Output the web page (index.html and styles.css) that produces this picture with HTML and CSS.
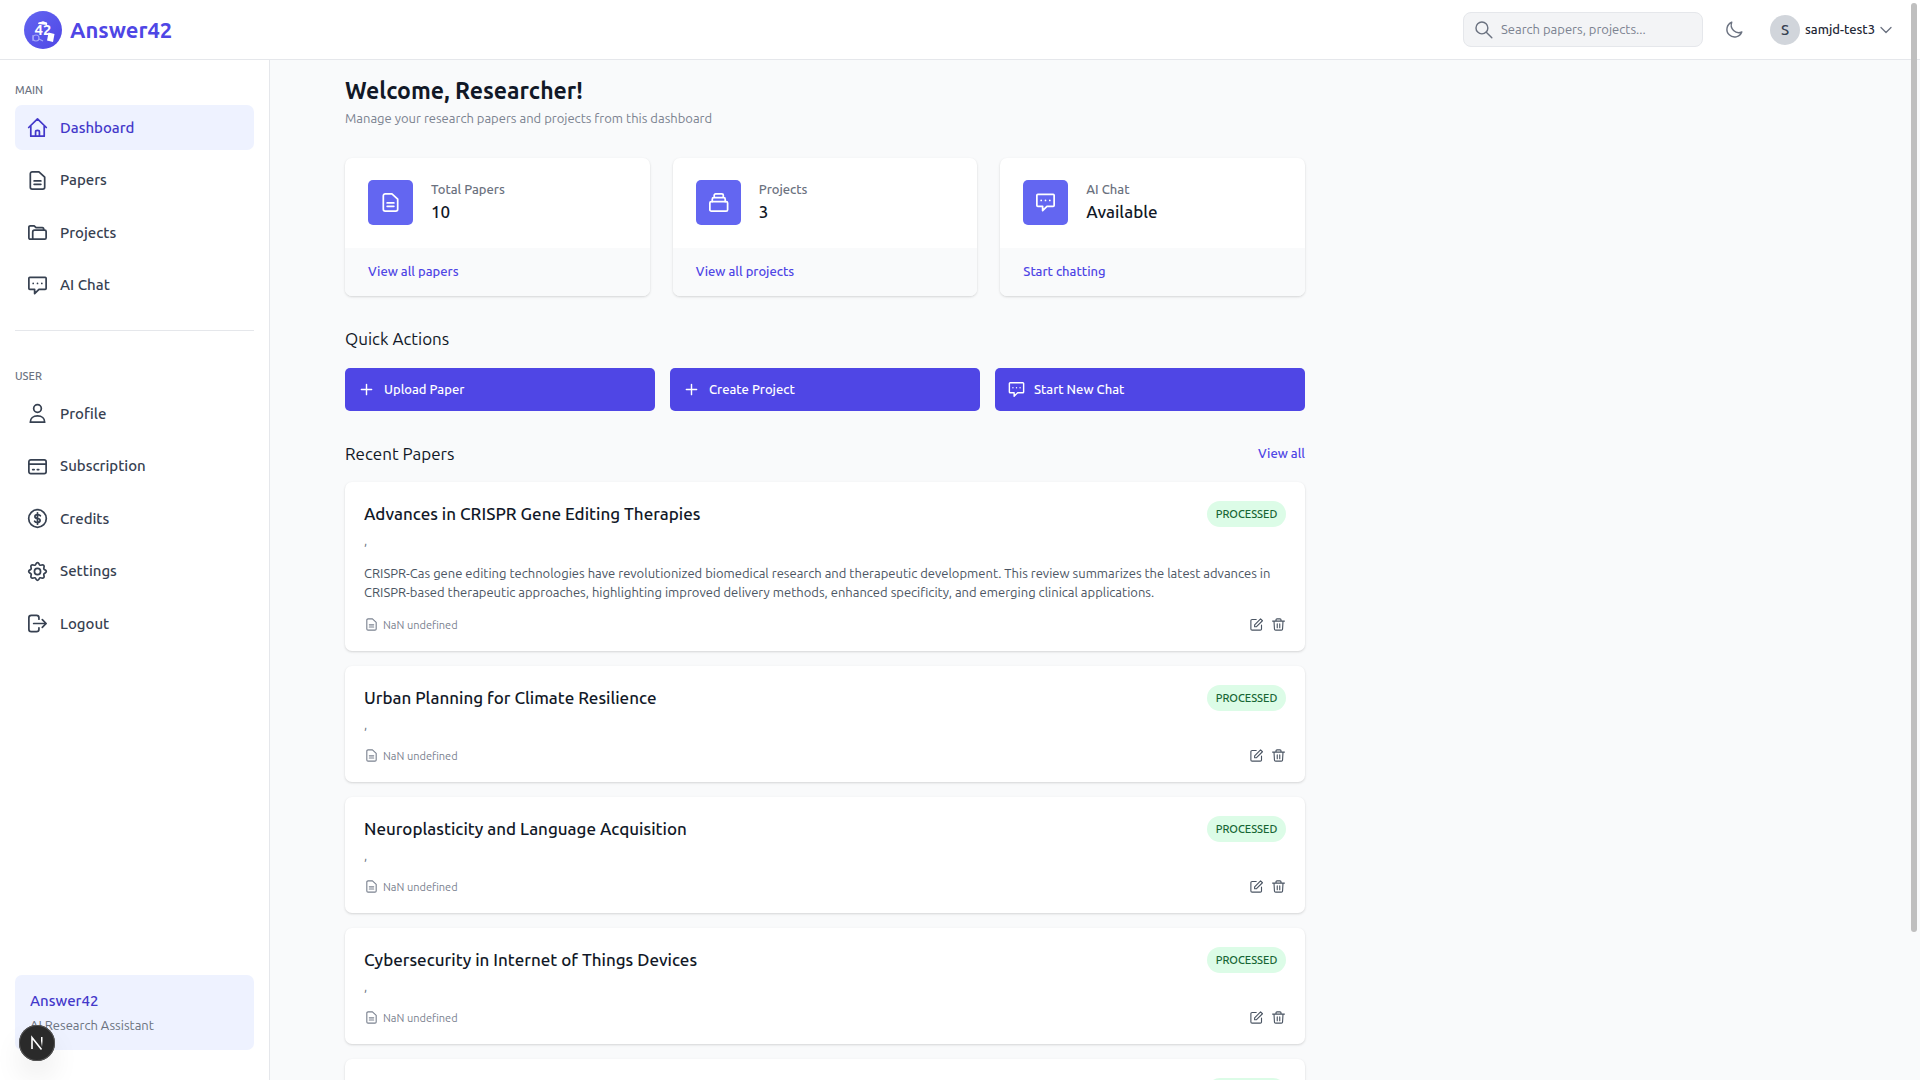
FILE: index.html
```html
<!DOCTYPE html>
<html lang="en">
<head>
<meta charset="utf-8">
<meta name="viewport" content="width=device-width, initial-scale=1">
<title>Answer42 - Dashboard</title>
<link rel="stylesheet" href="styles.css">
</head>
<body>
<svg class="sprite" aria-hidden="true">
  <symbol id="home" viewBox="0 0 24 24"><path d="M2.8 12 12 3l9.2 9M5 10.5V21h14V10.5M10 21v-4.5q0-1.5 2-1.5t2 1.5V21"/></symbol>
  <symbol id="doc" viewBox="0 0 24 24"><path d="M13.5 3H6.5a2 2 0 0 0-2 2v14a2 2 0 0 0 2 2h11a2 2 0 0 0 2-2V8.5zM8.5 12.5h7M8.5 16h7"/></symbol>
  <symbol id="folder" viewBox="0 0 24 24"><path d="M7 19H4.5A1.5 1.5 0 0 1 3 17.5V6.5A1.5 1.5 0 0 1 4.5 5h4l2 2H17q1.5 0 1.5 2M9 9.5h10.5a1.5 1.5 0 0 1 1.5 1.5v6.5a1.5 1.5 0 0 1-1.5 1.5H8.5A1.5 1.5 0 0 1 7 17.5v-6a2 2 0 0 1 2-2z"/></symbol>
  <symbol id="chat" viewBox="0 0 24 24"><path d="M4 3.5h16a1 1 0 0 1 1 1V15a1 1 0 0 1-1 1h-6.5L9 20.5V16H4a1 1 0 0 1-1-1V4.5a1 1 0 0 1 1-1zM7.5 9.8h.01M12 9.8h.01M16.5 9.8h.01"/></symbol>
  <symbol id="user" viewBox="0 0 24 24"><circle cx="12" cy="6.8" r="4"/><path d="M4.5 21c0-3.8 3-6.5 7.5-6.5s7.5 2.7 7.5 6.5z"/></symbol>
  <symbol id="card" viewBox="0 0 24 24"><rect x="3" y="5" width="18" height="14.5" rx="2"/><path d="M3 9.5h18M7 15.2h1.5M11.8 15.2h1.5"/></symbol>
  <symbol id="coin" viewBox="0 0 24 24"><circle cx="12" cy="12" r="9.2"/><path d="M15 9.2q-.8-1.3-3-1.3c-3.6 0-3.6 4.1 0 4.1s3.6 4.1 0 4.1q-2.2 0-3-1.3M12 6v12"/></symbol>
  <symbol id="gear" viewBox="0 0 24 24"><circle cx="12" cy="12" r="3.2"/><path d="M12 2.8c1.8 0 1.5 2.1 2.7 2.6s2.5-1.2 3.8.1-.4 2.6.1 3.8 2.6.9 2.6 2.7-2.1 1.5-2.6 2.7 1.2 2.5-.1 3.8-2.6-.4-3.8.1-.9 2.6-2.7 2.6-1.5-2.1-2.7-2.6-2.5 1.2-3.8-.1.4-2.6-.1-3.8-2.6-.9-2.6-2.7 2.1-1.5 2.6-2.7-1.2-2.5.1-3.8 2.6.4 3.8-.1.9-2.6 2.7-2.6z"/></symbol>
  <symbol id="logout" viewBox="0 0 24 24"><path d="M13.5 7.5V6a2.5 2.5 0 0 0-2.5-2.5H5.5A2.5 2.5 0 0 0 3 6v12a2.5 2.5 0 0 0 2.5 2.5H11a2.5 2.5 0 0 0 2.5-2.5v-1.5M8 12h13M17 8l4 4-4 4"/></symbol>
  <symbol id="stack" viewBox="0 0 24 24"><rect x="3" y="11" width="18.5" height="10" rx="1.5"/><path d="M5.5 11V8.5a1.5 1.5 0 0 1 1.5-1.5h10.5a1.5 1.5 0 0 1 1.5 1.5V11M7.5 7V4.5A1.5 1.5 0 0 1 9 3h6.5A1.5 1.5 0 0 1 17 4.5V7"/></symbol>
  <symbol id="plus" viewBox="0 0 24 24"><path d="M12 5.5v13M5.500 12h13"/></symbol>
  <symbol id="edit" viewBox="0 0 24 24"><path d="M11.5 4H5a2 2 0 0 0-2 2v13a2 2 0 0 0 2 2h13a2 2 0 0 0 2-2v-6M9 12.5 18.5 3l3 3-9.5 9.5H9z"/></symbol>
  <symbol id="trash" viewBox="0 0 24 24"><path d="M2.5 6.5h19M4.8 6.5 5.5 19a2 2 0 0 0 2 2h9a2 2 0 0 0 2-2l.7-12.5M8 6V4.5A1.5 1.5 0 0 1 9.5 3h5A1.5 1.5 0 0 1 16 4.5V6M10 11v6M14 11v6"/></symbol>
  <symbol id="search" viewBox="0 0 24 24"><circle cx="10" cy="10" r="7.5"/><path d="m15.5 15.5 7 7"/></symbol>
  <symbol id="moon" viewBox="0 0 24 24"><path d="M8.5 2.8a9.7 9.7 0 1 0 12.7 12.4A9.7 9.7 0 0 1 8.5 2.8z"/></symbol>
  <symbol id="chevron" viewBox="0 0 24 24"><path d="m2 7 10 10L22 7"/></symbol>
</svg>

<div class="app">
  <header class="topbar">
    <a class="brand" href="#">
      <svg class="brand-logo" viewBox="0 0 38 38" aria-hidden="true">
        <defs><linearGradient id="logo-fill" x1="0" y1="0" x2="1" y2="1"><stop offset="0" stop-color="#6366f1"/><stop offset="1" stop-color="#4f46e5"/></linearGradient></defs>
        <circle cx="19" cy="19" r="19" fill="url(#logo-fill)"/>
        <path d="M14 13q0-2.500 3-2 2-1.500 4 0 3 0 2 3z" fill="#fff"/>
        <text class="brand-mark" x="19" y="24">42</text>
        <path d="m24.500 21.500 6 1.500-1.500 8-6-1.500z" fill="#fff"/>
        <g fill="none" stroke="#a5a7f7" stroke-width="1.200"><circle cx="12" cy="27" r="3"/><path d="m15 28 4 2M9 24v6"/></g>
      </svg>
      <span>Answer42</span>
    </a>
    <div class="topbar-tools">
      <label class="search"><svg class="icon icon-md"><use href="#search"/></svg><input type="search" placeholder="Search papers, projects..." aria-label="Search"></label>
      <button class="theme" aria-label="Toggle theme"><svg class="icon icon-md"><use href="#moon"/></svg></button>
      <button class="account"><span class="avatar">S</span><span>samjd-test3</span><svg class="icon icon-xs"><use href="#chevron"/></svg></button>
    </div>
  </header>

  <aside class="sidebar">
    <nav aria-label="Main">
      <h2 class="nav-label">MAIN</h2>
      <ul class="nav-list nav-main">
        <li><a class="nav-item active" href="#"><svg class="icon"><use href="#home"/></svg>Dashboard</a></li>
        <li><a class="nav-item" href="#"><svg class="icon"><use href="#doc"/></svg>Papers</a></li>
        <li><a class="nav-item" href="#"><svg class="icon"><use href="#folder"/></svg>Projects</a></li>
        <li><a class="nav-item" href="#"><svg class="icon"><use href="#chat"/></svg>AI Chat</a></li>
      </ul>
    </nav>
    <nav class="nav-second" aria-label="User">
      <h2 class="nav-label">USER</h2>
      <ul class="nav-list nav-user">
        <li><a class="nav-item" href="#"><svg class="icon"><use href="#user"/></svg>Profile</a></li>
        <li><a class="nav-item" href="#"><svg class="icon"><use href="#card"/></svg>Subscription</a></li>
        <li><a class="nav-item" href="#"><svg class="icon"><use href="#coin"/></svg>Credits</a></li>
        <li><a class="nav-item" href="#"><svg class="icon"><use href="#gear"/></svg>Settings</a></li>
        <li><a class="nav-item" href="#"><svg class="icon"><use href="#logout"/></svg>Logout</a></li>
      </ul>
    </nav>
    <div class="promo">
      <strong>Answer42</strong>
      <span>AI Research Assistant</span>
    </div>
  </aside>

  <main class="main">
    <div class="content">
      <h1>Welcome, Researcher!</h1>
      <p class="lead">Manage your research papers and projects from this dashboard</p>

      <section class="stats" aria-label="Overview">
        <article class="stat">
          <div class="stat-body"><span class="stat-icon"><svg class="icon"><use href="#doc"/></svg></span><p><span class="stat-name">Total Papers</span><span class="stat-value">10</span></p></div>
          <div class="stat-foot"><a href="#">View all papers</a></div>
        </article>
        <article class="stat">
          <div class="stat-body"><span class="stat-icon"><svg class="icon"><use href="#stack"/></svg></span><p><span class="stat-name">Projects</span><span class="stat-value">3</span></p></div>
          <div class="stat-foot"><a href="#">View all projects</a></div>
        </article>
        <article class="stat">
          <div class="stat-body"><span class="stat-icon"><svg class="icon"><use href="#chat"/></svg></span><p><span class="stat-name">AI Chat</span><span class="stat-value">Available</span></p></div>
          <div class="stat-foot"><a href="#">Start chatting</a></div>
        </article>
      </section>

      <h2 class="section-title">Quick Actions</h2>
      <div class="actions">
        <button><svg class="icon icon-md"><use href="#plus"/></svg>Upload Paper</button>
        <button><svg class="icon icon-md"><use href="#plus"/></svg>Create Project</button>
        <button><svg class="icon icon-md"><use href="#chat"/></svg>Start New Chat</button>
      </div>

      <div class="section-head">
        <h2 class="section-title">Recent Papers</h2>
        <a href="#">View all</a>
      </div>
      <div class="papers">
        <article class="paper">
          <div class="paper-head"><h3>Advances in CRISPR Gene Editing Therapies</h3><span class="badge">PROCESSED</span></div>
          <p class="authors">,</p>
          <p class="abstract">CRISPR-Cas gene editing technologies have revolutionized biomedical research and therapeutic development. This review summarizes the latest advances in CRISPR-based therapeutic approaches, highlighting improved delivery methods, enhanced specificity, and emerging clinical applications.</p>
          <div class="paper-foot"><span class="size"><svg class="icon icon-sm"><use href="#doc"/></svg>NaN undefined</span><button aria-label="Edit"><svg class="icon icon-sm"><use href="#edit"/></svg></button><button aria-label="Delete"><svg class="icon icon-sm"><use href="#trash"/></svg></button></div>
        </article>
        <article class="paper">
          <div class="paper-head"><h3>Urban Planning for Climate Resilience</h3><span class="badge">PROCESSED</span></div>
          <p class="authors">,</p>
          <div class="paper-foot"><span class="size"><svg class="icon icon-sm"><use href="#doc"/></svg>NaN undefined</span><button aria-label="Edit"><svg class="icon icon-sm"><use href="#edit"/></svg></button><button aria-label="Delete"><svg class="icon icon-sm"><use href="#trash"/></svg></button></div>
        </article>
        <article class="paper">
          <div class="paper-head"><h3>Neuroplasticity and Language Acquisition</h3><span class="badge">PROCESSED</span></div>
          <p class="authors">,</p>
          <div class="paper-foot"><span class="size"><svg class="icon icon-sm"><use href="#doc"/></svg>NaN undefined</span><button aria-label="Edit"><svg class="icon icon-sm"><use href="#edit"/></svg></button><button aria-label="Delete"><svg class="icon icon-sm"><use href="#trash"/></svg></button></div>
        </article>
        <article class="paper">
          <div class="paper-head"><h3>Cybersecurity in Internet of Things Devices</h3><span class="badge">PROCESSED</span></div>
          <p class="authors">,</p>
          <div class="paper-foot"><span class="size"><svg class="icon icon-sm"><use href="#doc"/></svg>NaN undefined</span><button aria-label="Edit"><svg class="icon icon-sm"><use href="#edit"/></svg></button><button aria-label="Delete"><svg class="icon icon-sm"><use href="#trash"/></svg></button></div>
        </article>
        <article class="paper paper-next">
          <div class="paper-head"><span class="badge"></span></div>
        </article>
      </div>
    </div>
  </main>
</div>
<button class="dev-badge" aria-label="Open developer tools">
  <svg viewBox="0 0 36 36" aria-hidden="true"><defs><linearGradient id="n-fade" x1="0" y1="0" x2="0" y2="1"><stop offset=".4" stop-color="#fff"/><stop offset="1" stop-color="#fff" stop-opacity="0"/></linearGradient></defs><path d="M13 24V12.500L22.500 24.500" fill="none" stroke="#fff" stroke-width="1.600"/><path d="M22 12h1.500v10H22z" fill="url(#n-fade)"/></svg>
</button>
<div class="scroll-thumb" aria-hidden="true"></div>
</body>
</html>
```
FILE: styles.css
```css
:root {
  --indigo: #4f46e5;
  --indigo-dark: #4338ca;
  --indigo-soft: #eef2ff;
  --ink: #111827;
  --text: #374151;
  --muted: #6b7280;
  --line: #e5e7eb;
  --page: #f9fafb;
  --medium: 500;
  --shadow: 0 1px 3px rgb(0 0 0 / 10%), 0 1px 2px rgb(0 0 0 / 6%);
}

* { box-sizing: border-box; }

body {
  margin: 0;
  font: 13px/19px Ubuntu, "Noto Sans", sans-serif;
  color: var(--text);
  background: var(--page);
}

h1, h2, h3, p, ul { margin: 0; padding: 0; }
ul { list-style: none; }
a { color: var(--indigo); font-weight: var(--medium); text-decoration: none; }
button { font: inherit; color: inherit; background: none; border: 0; padding: 0; cursor: pointer; }

.sprite { display: none; }
.icon {
  flex: none;
  width: 23px;
  height: 23px;
  fill: none;
  stroke: currentColor;
  stroke-width: 1.8;
  stroke-linecap: round;
  stroke-linejoin: round;
}
.icon-md { width: 19px; height: 19px; }
.icon-sm { width: 15px; height: 15px; }
.icon-xs { width: 12px; height: 12px; stroke-width: 2.6; }

.app {
  display: grid;
  grid-template: auto 1fr / 270px 1fr;
  height: 100vh;
}

/* Top bar */
.topbar {
  grid-column: 1 / -1;
  display: flex;
  align-items: center;
  justify-content: space-between;
  height: 60px;
  padding: 0 28px 0 24px;
  background: #fff;
  border-bottom: 1px solid var(--line);
}
.brand { display: flex; align-items: center; gap: 8px; font-size: 22px; line-height: 28px; font-weight: 600; }
.brand-logo { width: 38px; height: 38px; }
.brand-mark { font-size: 15px; font-weight: 700; fill: #fff; text-anchor: middle; }
.topbar-tools { display: flex; align-items: center; }
.search {
  display: flex;
  align-items: center;
  gap: 8px;
  width: 240px;
  height: 35px;
  padding: 0 10px;
  color: var(--muted);
  background: #f3f4f6;
  border: 1px solid var(--line);
  border-radius: 8px;
}
.search input { flex: 1; min-width: 0; height: 19px; padding: 0; font: inherit; color: inherit; background: none; border: 0; outline: 0; }
.search input::placeholder { color: #7b8290; }
.theme { display: flex; margin: 0 26px 0 22px; color: var(--muted); }
.account { display: flex; align-items: center; gap: 5px; color: #1f2937; font-weight: var(--medium); }
.account .icon { color: var(--muted); }
.avatar { width: 30px; height: 30px; line-height: 30px; border-radius: 50%; background: #d1d5db; color: var(--text); font-size: 15px; }

/* Sidebar */
.sidebar {
  display: flex;
  flex-direction: column;
  min-height: 0;
  padding: 20px 15px 30px;
  background: #fff;
  border-right: 1px solid var(--line);
}
.nav-label { font-size: 11px; line-height: 20px; font-weight: var(--medium); color: var(--muted); }
.nav-list { display: flex; flex-direction: column; justify-content: space-between; margin-top: 5px; }
.nav-main { min-height: 203px; }
.nav-user { min-height: 255px; }
.nav-item {
  display: flex;
  align-items: center;
  gap: 11px;
  height: 45px;
  padding: 0 11px;
  border-radius: 7px;
  color: var(--text);
  font-size: 15px;
  line-height: 20px;
}
.nav-item.active { background: var(--indigo-soft); color: var(--indigo-dark); }
.nav-second { margin-top: 22px; padding-top: 35px; border-top: 1px solid var(--line); }
.promo { display: grid; margin-top: auto; padding: 15px; gap: 4px; border-radius: 7px; background: var(--indigo-soft); }
.promo strong { font-size: 15px; line-height: 22px; font-weight: var(--medium); color: var(--indigo-dark); }
.promo span { color: var(--muted); }

/* Main column */
.main { min-height: 0; overflow-y: auto; scrollbar-width: none; }
.content { max-width: 1110px; padding: 16px 75px; }
h1 { font-size: 23px; line-height: 30px; font-weight: 600; color: var(--ink); }
.lead { margin-top: 3px; color: #7b8290; }

.stats { display: grid; grid-template-columns: repeat(3, 1fr); gap: 23px; margin-top: 30px; }
.stat { overflow: hidden; border-radius: 7px; background: #fff; box-shadow: var(--shadow); }
.stat-body { display: flex; gap: 18px; height: 90px; padding: 22px 23px; }
.stat-icon { display: grid; place-items: center; width: 45px; height: 45px; border-radius: 5px; background: #6366f1; color: #fff; }
.stat-body p { display: grid; align-content: start; font-weight: var(--medium); }
.stat-name { color: var(--muted); }
.stat-value { font-size: 17px; line-height: 26px; color: var(--ink); }
.stat-foot { padding: 14px 23px 15px; background: var(--page); }

.section-title { font-size: 17px; line-height: 26px; font-weight: 400; color: var(--ink); }
.stats + .section-title { margin-top: 30px; }
.actions { display: grid; grid-template-columns: repeat(3, 1fr); gap: 15px; margin-top: 16px; }
.actions button {
  display: flex;
  align-items: center;
  gap: 8px;
  height: 43px;
  padding: 0 12px;
  border-radius: 5px;
  background: var(--indigo);
  color: #fff;
  font-weight: var(--medium);
}
.section-head { display: flex; align-items: flex-start; justify-content: space-between; margin-top: 30px; line-height: 24px; }

.papers { display: grid; gap: 15px; margin-top: 15px; }
.paper { padding: 19px; border-radius: 7px; background: #fff; box-shadow: var(--shadow); }
.paper-head { display: flex; align-items: center; justify-content: space-between; }
.paper h3 { font-size: 17px; line-height: 26px; font-weight: 500; color: var(--ink); }
.badge { margin-left: auto; padding: 3px 7px; border-radius: 13px; background: #dcfce7; color: #166534; font-size: 11px; line-height: 20px; font-weight: 500; min-width: 79px; min-height: 26px; text-align: center; }
.authors { margin-top: 4px; color: var(--muted); }
.abstract { margin-top: 14px; padding-bottom: 1px; color: #4b5563; }
.paper-foot { display: flex; align-items: center; gap: 7px; height: 15px; margin-top: 14px; color: #4b5563; }
.paper-foot button { display: flex; }
.size { display: flex; align-items: center; gap: 4px; margin-right: auto; color: #7b8290; font-size: 11px; line-height: 20px; }
.paper-next { min-height: 116px; }

/* Floating pieces over the page */
.dev-badge {
  position: fixed;
  left: 19px;
  bottom: 19px;
  width: 36px;
  height: 36px;
  border-radius: 50%;
  background: #2a2a2a;
  box-shadow: inset 0 0 0 1px #555, 0 16px 32px -8px rgb(0 0 0 / 24%);
}
.dev-badge svg { display: block; }
.scroll-thumb { position: fixed; top: 3px; right: 3px; width: 6px; height: 86vh; border-radius: 3px; background: #bfbfbf; }
```
